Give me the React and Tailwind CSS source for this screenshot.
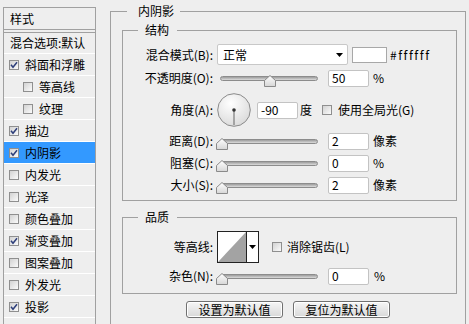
import React from "react";

function Check({ checked }) {
  return (
    <span className="w-[10px] h-[10px] shrink-0 border border-[#8f8f8f] bg-linear-to-br from-[#d2d2d2] to-[#fbfbfb] flex items-center justify-center">
      {checked && (
        <svg width="8" height="8" viewBox="0 0 8 8">
          <path d="M1 3.8 L3 6.3 L7 1.2" fill="none" stroke="#2d3e7a" strokeWidth="1.5" />
        </svg>
      )}
    </span>
  );
}

function Thumb({ id }) {
  return (
    <svg width="12" height="12" viewBox="0 0 12 12">
      <defs>
        <linearGradient id={id} x1="0" y1="0" x2="0" y2="1">
          <stop offset="0" stopColor="#ffffff" />
          <stop offset="1" stopColor="#d6d6d6" />
        </linearGradient>
      </defs>
      <path d="M0.5 11.5 V5.5 L6 0.5 L11.5 5.5 V11.5 Z" fill={`url(#${id})`} stroke="#8a8a8a" />
    </svg>
  );
}

function Slider({ thumbClass, id }) {
  return (
    <div className="relative w-[98px] h-[18px] shrink-0 ml-[7px]">
      <div className="mt-[7px] h-[5px] rounded-full border border-[#8c8c8c] bg-linear-to-b from-[#9c9c9c] to-[#dcdcdc]" />
      <div className={thumbClass}>
        <Thumb id={id} />
      </div>
    </div>
  );
}

function Field({ children, className }) {
  return (
    <div className={"w-[41px] h-[17px] shrink-0 bg-white border border-[#c3c3c3] rounded-[2px] pl-[3px] flex items-center " + className}>
      {children}
    </div>
  );
}

const leftRows = [
  { t: "斜面和浮雕", c: true },
  { t: "等高线", i: true },
  { t: "纹理", i: true },
  { t: "描边", c: true },
  { t: "内阴影", c: true, sel: true },
  { t: "内发光" },
  { t: "光泽" },
  { t: "颜色叠加" },
  { t: "渐变叠加", c: true },
  { t: "图案叠加" },
  { t: "外发光" },
  { t: "投影", c: true },
];

function LeftPanel() {
  return (
    <div className="ml-[3px] mt-[7px] w-[93px] h-[330px] shrink-0 border-x border-t border-[#a0a0a0]">
      <div className="h-[22px] border-b border-[#a0a0a0] pl-[6px] flex items-center">样式</div>
      <div className="h-[2px]" />
      <div className="h-[22px] border-t border-b border-t-[#a0a0a0] border-b-white pl-[6px] flex items-center whitespace-nowrap">
        混合选项:默认
      </div>
      {leftRows.map((r) => (
        <div
          key={r.t}
          className={
            "h-[22px] border-b border-white flex items-center gap-[6px] " +
            (r.i ? "pl-[19px] " : "pl-[5px] ") +
            (r.sel ? "bg-[#3399ff]" : "")
          }
        >
          <Check checked={r.c} />
          <span>{r.t}</span>
        </div>
      ))}
    </div>
  );
}

function Dial() {
  return (
    <svg width="34" height="34" viewBox="0 0 34 34" className="shrink-0 ml-[4px]">
      <defs>
        <radialGradient id="dialg" cx="0.4" cy="0.3" r="0.75">
          <stop offset="0" stopColor="#ffffff" />
          <stop offset="1" stopColor="#d9d9d9" />
        </radialGradient>
      </defs>
      <circle cx="17" cy="17" r="16.3" fill="url(#dialg)" stroke="#8a8a8a" />
      <line x1="17" y1="17" x2="17" y2="32" stroke="#7a7a7a" strokeWidth="1.2" />
      <circle cx="17" cy="17" r="1.8" fill="#333333" />
    </svg>
  );
}

function Arrow() {
  return (
    <svg width="7" height="4" viewBox="0 0 7 4">
      <path d="M0 0 H7 L3.5 4 Z" fill="#000000" />
    </svg>
  );
}

function Button({ children }) {
  return (
    <div className="w-[97px] h-[17px] border border-[#707070] rounded-[3px] bg-linear-to-b from-[#f6f6f6] to-[#d8d8d8] shadow-[inset_0_0_0_1px_#ffffff] flex items-center justify-center">
      {children}
    </div>
  );
}

export default function App() {
  return (
    <div className="w-[469px] h-[324px] overflow-hidden bg-[#eeeeee] flex items-start text-[12px] leading-[16px] text-black font-['Noto_Sans_CJK_SC',sans-serif]">
      <LeftPanel />
      <fieldset className="ml-[14px] mt-[3px] w-[356px] h-[340px] min-w-0 shrink-0 border border-[#a0a0a0] pl-[11px] pr-[8px]">
        <legend className="ml-[5px] pl-[11px] pr-[6px] leading-[16px]">内阴影</legend>

        <fieldset className="mt-[3px] min-w-0 border border-[#a0a0a0] pb-[6px]">
          <legend className="ml-[15px] pl-[7px] pr-[8px] leading-[16px]">结构</legend>

          <div className="flex items-center h-[21px] mt-[6px]">
            <span className="w-[90px] text-right shrink-0">混合模式(B):</span>
            <div className="ml-[4px] w-[131px] h-[21px] bg-white border border-[#c8c8c8] rounded-[2px] flex items-center justify-between pl-[5px] pr-[4px]">
              <span>正常</span>
              <Arrow />
            </div>
            <div className="ml-[4px] w-[35px] h-[16px] bg-white border border-[#a8a8a8]" />
            <span className="ml-[3px] tracking-[1.5px]">#ffffff</span>
          </div>

          <div className="flex items-center h-[18px] mt-[4px]">
            <span className="w-[90px] text-right shrink-0">不透明度(O):</span>
            <Slider id="t1" thumbClass="absolute top-[6px] left-[44px]" />
            <Field className="ml-[10px]">50</Field>
            <span className="ml-[4px]">%</span>
          </div>

          <div className="flex items-center h-[34px] mt-[6px]">
            <span className="w-[90px] text-right shrink-0">角度(A):</span>
            <Dial />
            <Field className="ml-[6px] pl-[2px]">-90</Field>
            <span className="ml-[2px]">度</span>
            <span className="ml-[10px] flex items-center gap-[6px]">
              <Check />
              <span>使用全局光(G)</span>
            </span>
          </div>

          <div className="flex items-center h-[18px] mt-[5px]">
            <span className="w-[90px] text-right shrink-0">距离(D):</span>
            <Slider id="t2" thumbClass="absolute top-[6px] left-[-4px]" />
            <Field className="ml-[10px]">2</Field>
            <span className="ml-[4px]">像素</span>
          </div>

          <div className="flex items-center h-[18px] mt-[4px]">
            <span className="w-[90px] text-right shrink-0">阻塞(C):</span>
            <Slider id="t3" thumbClass="absolute top-[6px] left-[-4px]" />
            <Field className="ml-[10px]">0</Field>
            <span className="ml-[4px]">%</span>
          </div>

          <div className="flex items-center h-[18px] mt-[4px]">
            <span className="w-[90px] text-right shrink-0">大小(S):</span>
            <Slider id="t4" thumbClass="absolute top-[6px] left-[-4px]" />
            <Field className="ml-[10px]">2</Field>
            <span className="ml-[4px]">像素</span>
          </div>
        </fieldset>

        <fieldset className="mt-[8px] min-w-0 border border-[#a0a0a0] pb-[8px]">
          <legend className="ml-[15px] pl-[7px] pr-[8px] leading-[16px]">品质</legend>

          <div className="flex items-center h-[32px] mt-[6px]">
            <span className="w-[90px] text-right shrink-0">等高线:</span>
            <div className="ml-[4px] w-[42px] h-[32px] border border-[#222222] flex bg-white">
              <svg width="28" height="30" viewBox="0 0 28 30" className="shrink-0">
                <polygon points="0,30 28,0 28,30" fill="#a3a3a3" />
              </svg>
              <div className="flex-1 border-l border-[#222222] flex items-center justify-center">
                <Arrow />
              </div>
            </div>
            <span className="ml-[13px] flex items-center gap-[5px]">
              <Check />
              <span>消除锯齿(L)</span>
            </span>
          </div>

          <div className="flex items-center h-[18px] mt-[4px]">
            <span className="w-[90px] text-right shrink-0">杂色(N):</span>
            <Slider id="t5" thumbClass="absolute top-[6px] left-[-4px]" />
            <Field className="ml-[10px]">0</Field>
            <span className="ml-[5px]">%</span>
          </div>
        </fieldset>

        <div className="mt-[7px] flex gap-[10px] pl-[64px]">
          <Button>设置为默认值</Button>
          <Button>复位为默认值</Button>
        </div>
      </fieldset>
    </div>
  );
}
